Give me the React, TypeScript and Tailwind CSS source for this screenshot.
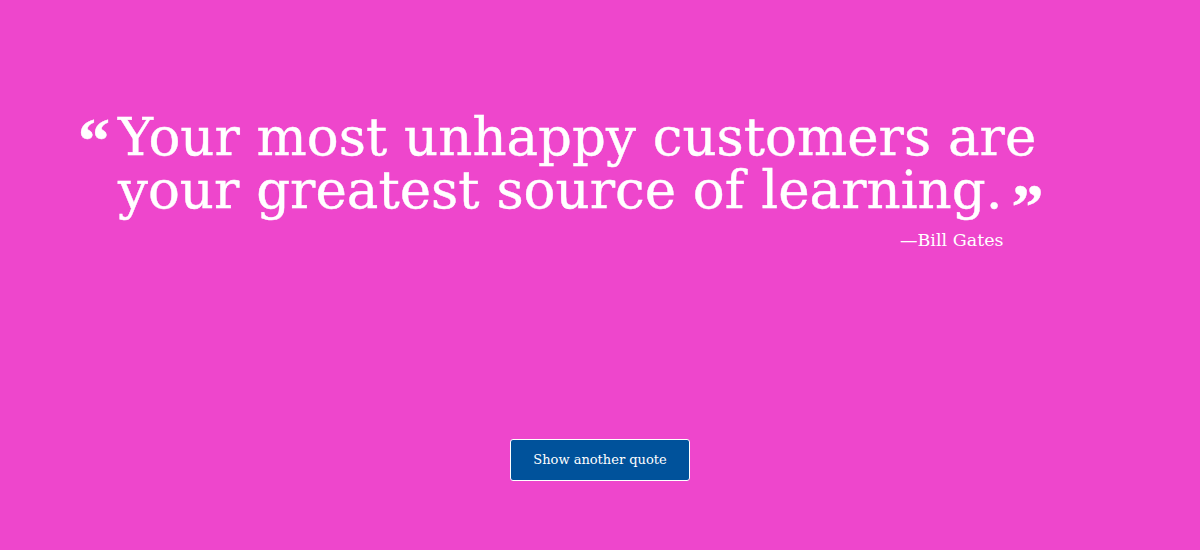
export default function App() {
  return (
    <div className="flex h-[550px] w-[1200px] flex-col bg-[#ee46cc] font-['DejaVu_Serif',serif] text-white">
      <div className="mt-[110px] ml-[118px] flex w-[960px] flex-col">
        <blockquote className="relative text-[53px] leading-[53px] [-webkit-text-stroke:0.4px_white]">
          <span className="absolute left-[-40px] top-[1px] font-['Liberation_Serif',serif] text-[64px] font-bold leading-[60px]">
            &ldquo;
          </span>
          Your most unhappy customers are your greatest source of learning.
          <span className="relative top-[20px] ml-[9px] font-['Liberation_Serif',serif] text-[64px] font-bold leading-[0]">
            &rdquo;
          </span>
        </blockquote>
        <p className="mt-[14px] ml-[782px] text-[17.5px] leading-[20px]">&mdash;Bill Gates</p>
      </div>
      <div className="mt-auto mb-[69px] flex justify-center">
        <button className="h-[42px] w-[180px] rounded-[3px] border-[1.5px] border-white bg-[#00529b] text-[13px] text-white">
          Show another quote
        </button>
      </div>
    </div>
  );
}
